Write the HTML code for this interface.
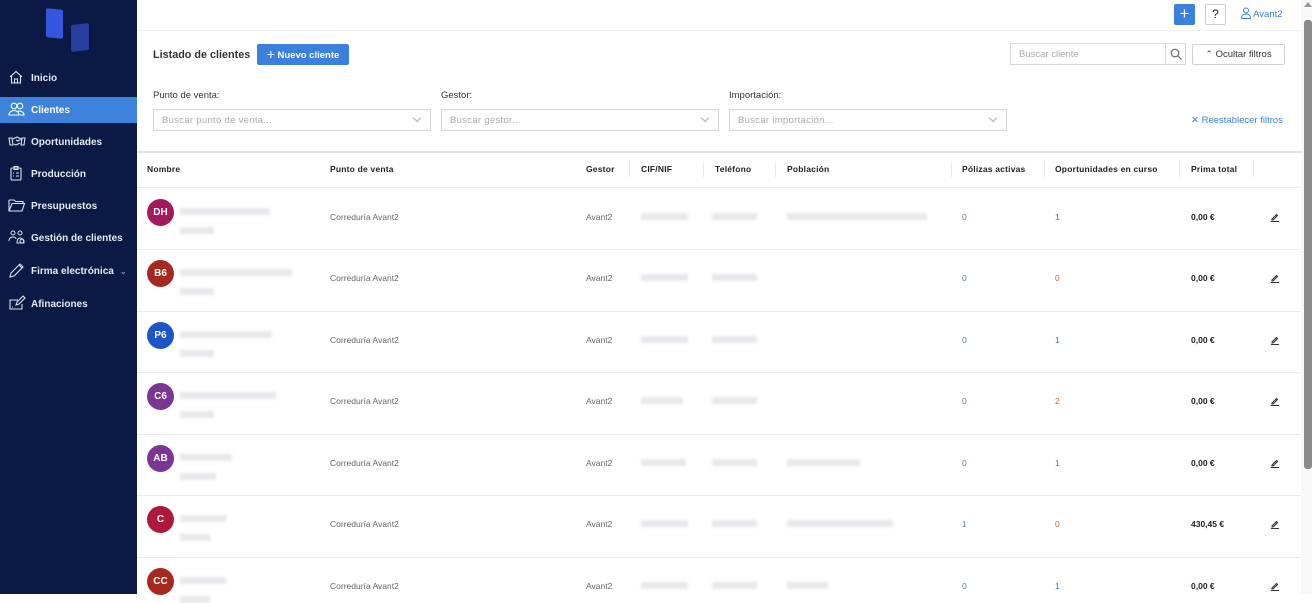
<!DOCTYPE html>
<html><head><meta charset="utf-8"><style>
*{box-sizing:border-box;margin:0;padding:0}
body{width:1312px;height:594px;overflow:hidden;background:#fff;font-family:"Liberation Sans",Arial,sans-serif;position:relative}
.a{position:absolute}
#sb{left:0;top:0;width:137px;height:594px;background:#0a1a45}
.ni{position:absolute;left:0;width:137px;height:26px;color:#e6e9f2;font-size:10px;font-weight:bold;display:flex;align-items:center;padding-left:31px}
.ni svg{position:absolute;left:8px;top:4px}
.act{background:#3d82db;color:#fff}
.lbl{font-size:9.5px;color:#333}
.sel{border:1px solid #d8d8d8;height:22px;font-size:9.5px;color:#aaa;padding:5px 8px;letter-spacing:.3px}
.sel:after{content:"";position:absolute;right:10px;top:5px;width:5px;height:5px;border-right:1px solid #aaa;border-bottom:1px solid #aaa;transform:rotate(45deg)}
.th{font-size:8.5px;font-weight:bold;color:#222;top:164px;letter-spacing:.2px}
.sep{top:161px;width:1px;height:16px;background:#eaeaea}
.hl{left:137px;width:1164px;height:1px;background:#ececec}
.av{width:27px;height:27px;border-radius:50%;color:#fff;font-size:10px;font-weight:bold;display:flex;align-items:center;justify-content:center}
.bl{height:7px;background:#e2e0e4;filter:blur(1.2px);opacity:.75}
.t{font-size:8.5px;color:#666}
.n{font-size:8.5px;color:#5a7a9a}
.p{font-size:8.5px;font-weight:bold;color:#222}
</style></head><body>
<div id="sb" class="a">
 <div class="a" style="left:46px;top:9px;width:17px;height:29px;background:#3557e0;transform:skewY(6deg);border-radius:2px"></div>
 <div class="a" style="left:71px;top:24px;width:18px;height:27px;background:#2740a0;transform:skewY(-6deg);border-radius:2px"></div>
 <div class="ni" style="top:65px"><svg width="16" height="16" viewBox="0 0 16 16" fill="none" stroke="#dfe3ee" stroke-width="1.1"><path d="M2 8L8 2.5 14 8M3.5 7v7h9V7M6.5 14v-4h3v4"/></svg>Inicio</div>
 <div class="ni act" style="top:97px"><svg width="18" height="16" viewBox="0 0 18 16" fill="none" stroke="#fff" stroke-width="1.1"><circle cx="6" cy="5" r="2.8"/><circle cx="12" cy="5" r="2.8"/><path d="M1 14c0-3 2.5-4.5 5-4.5s5 1.5 5 4.5zM10 10c3 0 6 1 6 4h-4"/></svg>Clientes</div>
 <div class="ni" style="top:129px"><svg width="18" height="16" viewBox="0 0 18 16" fill="none" stroke="#dfe3ee" stroke-width="1.1"><path d="M1 5h3l1 7H2zM17 5h-3l-1 7h3zM5 6l4-2 4 2-3 2-2-1M6 11l2 1 2-1 2-1"/></svg>Oportunidades</div>
 <div class="ni" style="top:161px"><svg width="16" height="16" viewBox="0 0 16 16" fill="none" stroke="#dfe3ee" stroke-width="1.1"><rect x="3" y="3" width="10" height="12" rx="1"/><rect x="6" y="1.5" width="4" height="3"/><path d="M5 8h1M8 8h3M5 11h1M8 11h3"/></svg>Producción</div>
 <div class="ni" style="top:193px"><svg width="18" height="16" viewBox="0 0 18 16" fill="none" stroke="#dfe3ee" stroke-width="1.1"><path d="M1 3h5l1.5 1.5H15v2M1 3v11h13l2.5-7.5H4L1 14"/></svg>Presupuestos</div>
 <div class="ni" style="top:225px"><svg width="18" height="16" viewBox="0 0 18 16" fill="none" stroke="#dfe3ee" stroke-width="1"><circle cx="5" cy="4" r="2"/><circle cx="12" cy="4" r="2"/><path d="M1 12c0-3 2-4 4-4s3 1 3 2M9 14c0-3 1-5 3-5s4 2 4 5z"/><circle cx="14" cy="12" r="2"/></svg>Gestión de clientes</div>
 <div class="ni" style="top:258px"><svg width="18" height="16" viewBox="0 0 18 16" fill="none" stroke="#dfe3ee" stroke-width="1.1"><path d="M2 15l1-4L12 2l3 3-9 9zM11 3l3 3"/></svg>Firma electrónica<span style="margin-left:6px;font-size:8px;color:#8892b0">&#8964;</span></div>
 <div class="ni" style="top:291px"><svg width="18" height="16" viewBox="0 0 18 16" fill="none" stroke="#dfe3ee" stroke-width="1.1"><path d="M10 5H2v9h12V9M8 10l1-3 6-6 2 2-6 6zM4 12h1"/></svg>Afinaciones</div>
</div>
<div class="a" style="left:137px;top:30px;width:1164px;height:1px;background:#eee"></div>
<div class="a" style="left:1174px;top:4px;width:21px;height:21px;background:#3b80dc;border-radius:2px;color:#fff;font-size:17px;line-height:20px;text-align:center">+</div>
<div class="a" style="left:1205px;top:4px;width:21px;height:21px;border:1px solid #ccc;border-radius:2px;font-size:12px;line-height:19px;text-align:center;color:#222">?</div>
<div class="a" style="left:1241px;top:7px;font-size:9.5px;color:#3b80dc"><svg width="10" height="12" viewBox="0 0 10 12" fill="none" stroke="#3b80dc" stroke-width="1" style="vertical-align:-2px"><circle cx="5" cy="3.5" r="2.5"/><path d="M0.5 11.5c0-3 2-4.5 4.5-4.5s4.5 1.5 4.5 4.5z"/></svg> Avant2</div>
<div class="a" style="left:153px;top:49px;font-size:10.8px;font-weight:bold;color:#333">Listado de clientes</div>
<div class="a" style="left:257px;top:44px;width:92px;height:21px;background:#3b80dc;border-radius:2px;color:#fff;font-size:9.5px;font-weight:bold;line-height:21px;text-align:center"><span style="font-size:14px;font-weight:normal;vertical-align:-1px">+</span> Nuevo cliente</div>
<div class="a" style="left:1010px;top:43px;width:176px;height:22px;border:1px solid #d8d8d8;font-size:9.5px;color:#aaa;padding:5px 8px">Buscar cliente</div>
<div class="a" style="left:1165px;top:43px;width:21px;height:22px;border:1px solid #d8d8d8"><svg width="12" height="12" viewBox="0 0 12 12" fill="none" stroke="#666" stroke-width="1.1" style="margin:4px"><circle cx="5" cy="5" r="3.8"/><path d="M8 8l3.5 3.5"/></svg></div>
<div class="a" style="left:1192px;top:44px;width:93px;height:21px;border:1px solid #d0d0d0;border-radius:2px;font-size:9.5px;color:#333;line-height:19px;text-align:center"><span style="font-size:9px">&#8963;</span> Ocultar filtros</div>
<div class="a lbl" style="left:153px;top:90px">Punto de venta:</div>
<div class="a sel" style="left:153px;top:109px;width:278px">Buscar punto de venta...</div>
<div class="a lbl" style="left:441px;top:90px">Gestor:</div>
<div class="a sel" style="left:441px;top:109px;width:278px">Buscar gestor...</div>
<div class="a lbl" style="left:729px;top:90px">Importación:</div>
<div class="a sel" style="left:729px;top:109px;width:278px">Buscar importación...</div>
<div class="a" style="left:1191px;top:115px;font-size:9.5px;color:#3b80dc">✕ Reestablecer filtros</div>
<div class="a" style="left:137px;top:151px;width:1164px;height:2px;background:#e2e2e2"></div>
<div class="a th" style="left:147px">Nombre</div>
<div class="a th" style="left:330px">Punto de venta</div>
<div class="a th" style="left:586px">Gestor</div>
<div class="a sep" style="left:629px"></div>
<div class="a th" style="left:641px">CIF/NIF</div>
<div class="a sep" style="left:703px"></div>
<div class="a th" style="left:715px">Teléfono</div>
<div class="a sep" style="left:775px"></div>
<div class="a th" style="left:787px">Población</div>
<div class="a sep" style="left:951px"></div>
<div class="a th" style="left:962px">Pólizas activas</div>
<div class="a sep" style="left:1044px"></div>
<div class="a th" style="left:1055px">Oportunidades en curso</div>
<div class="a sep" style="left:1179px"></div>
<div class="a th" style="left:1191px">Prima total</div>
<div class="a sep" style="left:1253px"></div>
<div class="a hl" style="top:187px"></div>
<div id="rows"></div>
<div class="a" style="left:1301px;top:0;width:11px;height:594px;background:#f8f8f8"></div>
<div class="a" style="left:1304px;top:2px;width:0;height:0;border-left:4px solid transparent;border-right:4px solid transparent;border-bottom:5px solid #999"></div>
<div class="a" style="left:1304px;top:20px;width:8px;height:449px;background:#8a8a8a;border-radius:3px"></div>
<script>
var R=[["DH","#a3195b",90,34,47,45,140,"0","1","0,00 €"],["B6","#a6281e",112,34,47,45,0,"0","0","0,00 €"],["P6","#1a56c8",92,34,47,45,0,"0","1","0,00 €"],["C6","#7b3595",96,34,42,45,0,"0","2","0,00 €"],["AB","#7b3595",52,36,45,45,73,"0","1","0,00 €"],["C","#b0173d",46,30,47,45,106,"1","0","430,45 €"],["CC","#a6281e",46,30,47,45,41,"0","1","0,00 €"]];
var tops=[188,249,311,372,434,495,557],h="";
R.forEach(function(r,i){var t=tops[i],c=t+24;
h+='<div class="a av" style="left:147px;top:'+(t+11)+'px;background:'+r[1]+'">'+r[0]+'</div>';
h+='<div class="a bl" style="left:180px;top:'+(t+20)+'px;width:'+r[2]+'px"></div>';
h+='<div class="a bl" style="left:180px;top:'+(t+39)+'px;width:'+r[3]+'px"></div>';
h+='<div class="a t" style="left:330px;top:'+c+'px">Correduría Avant2</div>';
h+='<div class="a t" style="left:586px;top:'+c+'px">Avant2</div>';
h+='<div class="a bl" style="left:641px;top:'+(c+1)+'px;width:'+r[4]+'px"></div>';
h+='<div class="a bl" style="left:712px;top:'+(c+1)+'px;width:'+r[5]+'px"></div>';
if(r[6])h+='<div class="a bl" style="left:787px;top:'+(c+1)+'px;width:'+r[6]+'px"></div>';
h+='<div class="a n" style="left:962px;top:'+c+'px">'+r[7]+'</div>';
h+='<div class="a n" style="left:1055px;top:'+c+'px;color:'+(r[8]=="1"?"#3b6fb0":"#b06a3b")+'">'+r[8]+'</div>';
h+='<div class="a p" style="left:1191px;top:'+c+'px">'+r[9]+'</div>';
h+='<svg class="a" style="left:1270px;top:'+(c)+'px" width="10" height="10" viewBox="0 0 10 10" fill="none" stroke="#333" stroke-width="1.1"><path d="M2 7l4.5-4.5 1 1L3 8H2zM1 9.5h8"/></svg>';
if(i<6)h+='<div class="a hl" style="top:'+(tops[i+1])+'px"></div>';});
document.getElementById("rows").innerHTML=h;
</script>
</body></html>
